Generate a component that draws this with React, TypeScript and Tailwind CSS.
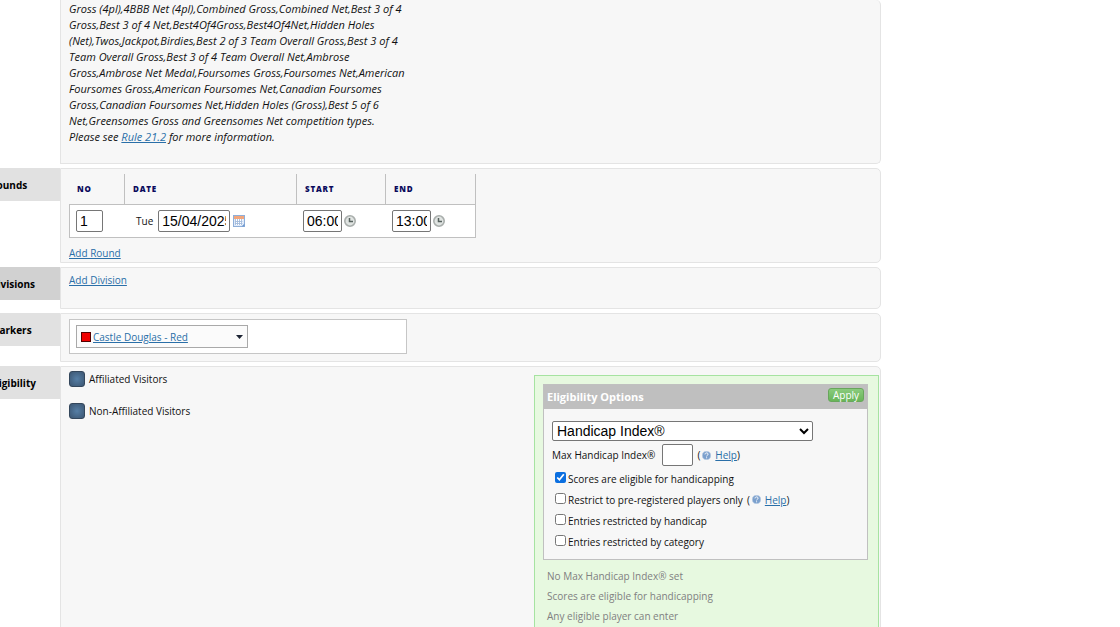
import type { ReactNode } from "react";

const link = "text-[#2a6fa8] underline";
const field =
  "h-[22px] rounded-[2px] border border-[#767676] bg-white px-[3px] font-['Liberation_Sans',Arial,sans-serif] text-[14px] text-black";

function Section({
  label,
  dark = false,
  className = "",
  children,
}: {
  label?: string;
  dark?: boolean;
  className?: string;
  children: ReactNode;
}) {
  return (
    <section className="flex items-start">
      <div className="w-20 shrink-0">
        {label && (
          <h2
            className={`flex h-[33px] items-center pl-[10px] font-bold text-black ${
              dark ? "bg-[#d1d1d1]" : "bg-[#e1e1e1]"
            }`}
          >
            {label}
          </h2>
        )}
      </div>
      <div
        className={`min-w-0 flex-1 rounded-r-[5px] border border-[#e4e4e4] bg-[#f7f7f7] pl-2 ${className}`}
      >
        {children}
      </div>
    </section>
  );
}

function CalendarIcon() {
  return (
    <svg width="12" height="12" viewBox="0 0 12 12" aria-hidden="true">
      <rect x="0.5" y="0.5" width="11" height="11" fill="#dfeafa" stroke="#8eaed8" />
      <rect x="1" y="1" width="10" height="3" fill="#f2a67c" />
      <rect x="2" y="4" width="7.5" height="6" fill="#fff" />
      <path d="M2.500 4v6M4.500 4v6M6.500 4v6M8.500 4v6M2 6.500h7.500M2 8.500h7.500" stroke="#a3bbdc" strokeWidth="0.9" />
      <path d="M8.500 11.500l3-3v3z" fill="#6d97cf" />
    </svg>
  );
}

function ClockIcon() {
  return (
    <svg width="12" height="12" viewBox="0 0 12 12" aria-hidden="true">
      <circle cx="6" cy="6" r="5.2" fill="#e0e4e2" stroke="#a9aeac" strokeWidth="1.6" />
      <path d="M5.500 3v3.500h3.500" fill="none" stroke="#56615e" strokeWidth="1.500" />
    </svg>
  );
}

function HelpLink() {
  return (
    <span className="inline-flex items-center">
      (
      <svg className="mr-1 ml-[2px]" width="9" height="9" viewBox="0 0 9 9" aria-hidden="true">
        <circle cx="4.5" cy="4.5" r="4.1" fill="#7ba0cd" stroke="#b3c8e2" strokeWidth="0.8" />
        <path
          d="M3 3.400c0-2 3.100-1.900 3.100-.2 0 1.100-1.500 1-1.500 2.200M4.600 6.300v1"
          fill="none"
          stroke="#fff"
          strokeWidth="1"
        />
      </svg>
      <a href="#help" className={link}>
        Help
      </a>
      )
    </span>
  );
}

function Option({ label, checked, help }: { label: string; checked?: boolean; help?: boolean }) {
  return (
    <div className="flex h-[21px] items-center gap-1">
      <label className="flex items-center gap-[2px]">
        <input type="checkbox" defaultChecked={checked} className="mb-[2px] size-[11px] accent-[#0b6fe0]" />
        {label}
      </label>
      {help && <HelpLink />}
    </div>
  );
}

function Visitor({ label }: { label: string }) {
  return (
    <button type="button" className="flex h-4 items-center gap-1">
      <span className="size-4 rounded-[3px] border border-[#34475c] bg-radial from-[#567fa6] to-[#3c5672]" />
      {label}
    </button>
  );
}

const th =
  "border-r border-b border-[#c0c0c0] px-2 text-left text-[8px] font-extrabold tracking-widest text-[#0a0a5c]";

export default function App() {
  return (
    <div className="h-screen overflow-hidden bg-white font-['Open_Sans','Noto_Sans',sans-serif] text-[10px] leading-4 text-[#111]">
      <main className="-ml-5 flex max-w-[901px] flex-col gap-1">
        <Section className="h-[164px] border-t-0 pt-px">
          <p className="w-[340px] text-[11px] italic">
            Gross (4pl),4BBB Net (4pl),Combined Gross,Combined Net,Best 3 of 4
            <br />
            Gross,Best 3 of 4 Net,Best4Of4Gross,Best4Of4Net,Hidden Holes
            <br />
            (Net),Twos,Jackpot,Birdies,Best 2 of 3 Team Overall Gross,Best 3 of 4
            <br />
            Team Overall Gross,Best 3 of 4 Team Overall Net,Ambrose
            <br />
            Gross,Ambrose Net Medal,Foursomes Gross,Foursomes Net,American
            <br />
            Foursomes Gross,American Foursomes Net,Canadian Foursomes
            <br />
            Gross,Canadian Foursomes Net,Hidden Holes (Gross),Best 5 of 6
            <br />
            Net,Greensomes Gross and Greensomes Net competition types.
            <br />
            Please see{" "}
            <a href="#rule" className={link}>
              Rule 21.2
            </a>{" "}
            for more information.
          </p>
        </Section>

        <Section label="Rounds" className="h-[95px] pt-[5px]">
          <table className="w-[407px] table-fixed border-separate border-spacing-0">
            <thead>
              <tr className="h-[31px]">
                <th className={`${th} w-14`}>NO</th>
                <th className={`${th} w-[172px]`}>DATE</th>
                <th className={`${th} w-[89px]`}>START</th>
                <th className={`${th} w-[90px]`}>END</th>
              </tr>
            </thead>
            <tbody>
              <tr className="h-[33px] bg-white">
                <td className="border-b border-l border-[#c0c0c0] pl-[6px]">
                  <input aria-label="Round number" defaultValue="1" className={`${field} w-[27px]`} />
                </td>
                <td className="border-b border-[#c0c0c0] pl-[11px]">
                  <div className="flex items-center">
                    <label htmlFor="date" className="mr-[5px]">
                      Tue
                    </label>
                    <input id="date" defaultValue="15/04/2025" className={`${field} mr-[3px] w-[72px]`} />
                    <CalendarIcon />
                  </div>
                </td>
                <td className="border-b border-[#c0c0c0] pl-[6px]">
                  <div className="flex items-center gap-[2px]">
                    <input aria-label="Start time" defaultValue="06:00" className={`${field} w-[39px]`} />
                    <ClockIcon />
                  </div>
                </td>
                <td className="border-r border-b border-[#c0c0c0] pl-[6px]">
                  <div className="flex items-center gap-[2px]">
                    <input aria-label="End time" defaultValue="13:00" className={`${field} w-[39px]`} />
                    <ClockIcon />
                  </div>
                </td>
              </tr>
            </tbody>
          </table>
          <a href="#add-round" className={`${link} mt-[7px] block w-fit`}>
            Add Round
          </a>
        </Section>

        <Section label="Divisions" dark className="h-[42px] pt-1">
          <a href="#add-division" className={`${link} block w-fit`}>
            Add Division
          </a>
        </Section>

        <Section label="Markers" className="h-[49px] pt-[5px]">
          <div className="w-[338px] border border-[#c6c6c6] bg-white px-[6px] py-[5px]">
            <div className="flex h-[23px] w-[172px] items-center border border-[#a9a9a9] bg-[#fbfbfb] px-1">
              <span className="mr-[2px] size-[10px] border border-[#500] bg-[#f00000]" />
              <a href="#markers" className={link}>
                Castle Douglas - Red
              </a>
              <svg className="ml-auto" width="7" height="4" viewBox="0 0 7 4" aria-hidden="true">
                <path d="M0 0h7L3.500 4z" fill="#1d2433" />
              </svg>
            </div>
          </div>
        </Section>

        <Section label="Eligibility" className="flex h-[400px] justify-between pr-px">
          <div className="flex flex-col gap-4 pt-1">
            <Visitor label="Affiliated Visitors" />
            <Visitor label="Non-Affiliated Visitors" />
          </div>
          <div className="mt-2 w-[345px] border border-[#a6e3a1] bg-[#e7f9e0] pt-2 pr-[10px] pl-2">
            <div className="border border-[#c0c0c0] bg-[#f7f7f7]">
              <div className="flex h-6 items-center justify-between bg-[#bfbfbf] pr-[3px] pl-[3px]">
                <h3 className="text-[11px] font-bold text-white">Eligibility Options</h3>
                <button
                  type="button"
                  className="mb-1 h-[14px] w-9 rounded-[3px] border border-[#68a65c] bg-linear-to-b from-[#8acb7d] to-[#68b558] text-center leading-3 text-white"
                >
                  Apply
                </button>
              </div>
              <div className="px-2 pt-3 pb-[7px]">
                <select
                  aria-label="Handicap type"
                  className="block h-5 w-[261px] rounded-[2px] border border-[#767676] bg-white font-['Liberation_Sans',Arial,sans-serif] text-[14px] text-black"
                >
                  <option>Handicap Index®</option>
                </select>
                <div className="mt-[3px] mb-[2px] flex items-center">
                  <label htmlFor="max" className="mr-[7px]">
                    Max Handicap Index®
                  </label>
                  <input id="max" className={`${field} mr-1 w-[31px]`} />
                  <HelpLink />
                </div>
                <div className="pl-[3px]">
                  <Option label="Scores are eligible for handicapping" checked />
                  <Option label="Restrict to pre-registered players only" help />
                  <Option label="Entries restricted by handicap" />
                  <Option label="Entries restricted by category" />
                </div>
              </div>
            </div>
            <ul className="mt-2 flex flex-col gap-1 pl-1 text-[#808080]">
              <li>No Max Handicap Index® set</li>
              <li>Scores are eligible for handicapping</li>
              <li>Any eligible player can enter</li>
            </ul>
          </div>
        </Section>
      </main>
    </div>
  );
}
